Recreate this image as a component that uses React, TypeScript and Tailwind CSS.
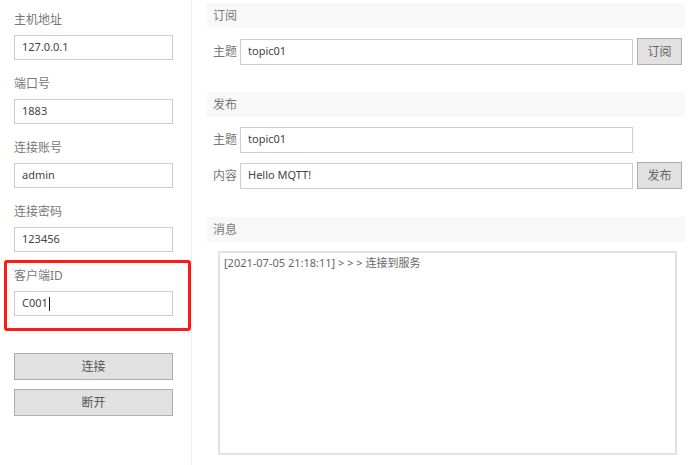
import React from "react";

const font = { fontFamily: '"Noto Sans", "Noto Sans CJK SC", sans-serif' };

function Field({ label, value, caret }: { label: string; value: string; caret?: boolean }) {
  return (
    <div className="flex flex-col">
      <div className="h-[16px] text-[12px] leading-[16px] text-[#777]">{label}</div>
      <div className="mt-[7px] flex h-[25px] w-[159px] items-center border border-[#cbcbcb] bg-white pl-[7px] text-[11px] text-[#444]">
        {value}
        {caret && <span className="ml-[1px] inline-block h-[14px] w-[1px] bg-[#222]" />}
      </div>
    </div>
  );
}

function Band({ title }: { title: string }) {
  return (
    <div className="flex h-[25px] items-center bg-[#f8f8f8] pl-[6px] text-[12px] text-[#777]">{title}</div>
  );
}

function Row({ label, value, button }: { label: string; value: string; button?: string }) {
  return (
    <div className="flex h-[27px] items-center pl-[6px] pr-[3px]">
      <span className="w-[27px] text-[12px] text-[#777]">{label}</span>
      <div className="flex h-[26px] flex-1 items-center border border-[#cdcdcd] bg-white pl-[7px] text-[11px] text-[#444]">
        {value}
      </div>
      {button ? (
        <button className="ml-[4px] h-[27px] w-[45px] border border-[#adadad] bg-[#e1e1e1] text-[12px] text-[#666]">
          {button}
        </button>
      ) : (
        <div className="ml-[4px] w-[45px]" />
      )}
    </div>
  );
}

export default function App() {
  return (
    <div className="relative flex h-[465px] w-[694px] overflow-hidden bg-white" style={font}>
      <div className="flex w-[192px] shrink-0 flex-col border-r border-[#f0f0f0] pl-[14px] pt-[12px]">
        <div className="flex flex-col gap-[16px]">
          <Field label="主机地址" value="127.0.0.1" />
          <Field label="端口号" value="1883" />
          <Field label="连接账号" value="admin" />
          <Field label="连接密码" value="123456" />
          <Field label="客户端ID" value="C001" caret />
        </div>
        <div className="mt-[37px] flex flex-col gap-[9px]">
          <button className="h-[27px] w-[159px] border border-[#adadad] bg-[#e1e1e1] text-[12px] text-[#555]">连接</button>
          <button className="h-[27px] w-[159px] border border-[#adadad] bg-[#e1e1e1] text-[12px] text-[#555]">断开</button>
        </div>
      </div>

      <div className="flex flex-1 flex-col pl-[15px] pr-[9px] pt-[3px]">
        <Band title="订阅" />
        <div className="mt-[10px]">
          <Row label="主题" value="topic01" button="订阅" />
        </div>
        <div className="mt-[27px]">
          <Band title="发布" />
        </div>
        <div className="mt-[9px] flex flex-col gap-[9px]">
          <Row label="主题" value="topic01" />
          <Row label="内容" value="Hello MQTT!" button="发布" />
        </div>
        <div className="mt-[28px]">
          <Band title="消息" />
        </div>
        <div className="ml-[11px] mr-[8px] mt-[9px] h-[204px] border-2 border-[#e2e2e2] bg-white px-[4px] pt-[2px] text-[11px] text-[#666]">
          [2021-07-05 21:18:11] &gt; &gt; &gt; 连接到服务
        </div>
      </div>

      <div className="absolute left-[4px] top-[260px] h-[71px] w-[187px] rounded-[3px] border-[3px] border-[#ff1a1a]" />
    </div>
  );
}
